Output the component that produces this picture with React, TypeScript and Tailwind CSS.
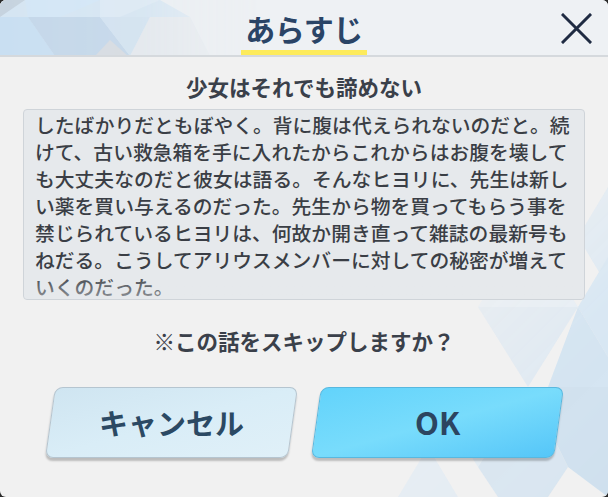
import React from 'react';

const bodyLines = [
  'したばかりだともぼやく。背に腹は代えられないのだと。続',
  'けて、古い救急箱を手に入れたからこれからはお腹を壊して',
  'も大丈夫なのだと彼女は語る。そんなヒヨリに、先生は新し',
  'い薬を買い与えるのだった。先生から物を買ってもらう事を',
  '禁じられているヒヨリは、何故か開き直って雑誌の最新号も',
  'ねだる。こうしてアリウスメンバーに対しての秘密が増えて',
  'いくのだった。',
];

const font = { fontFamily: '"Noto Sans CJK JP", "Noto Sans", sans-serif' };

// faint triangle pattern in the header's top-left corner
const HeaderPattern = () => (
  <svg className="absolute left-0 top-0" width="260" height="56" viewBox="0 0 260 56">
    <defs>
      <linearGradient id="hfade" x1="0" y1="0" x2="1" y2="0">
        <stop offset="0" stopColor="#fff" stopOpacity="1" />
        <stop offset="0.55" stopColor="#fff" stopOpacity="0.9" />
        <stop offset="1" stopColor="#fff" stopOpacity="0" />
      </linearGradient>
      <mask id="hmask">
        <rect width="260" height="56" fill="url(#hfade)" />
      </mask>
    </defs>
    <g mask="url(#hmask)">
      <rect width="260" height="56" fill="#d5e5f2" />
      <polygon points="0,0 25,0 0,17" fill="#c6d3df" />
      <polygon points="25,0 100,0 60,17 28,17" fill="#d3e6f6" />
      <polygon points="0,17 28,17 55,56 0,56" fill="#c9dff2" />
      <polygon points="28,17 100,17 130,56 55,56" fill="#c4d7e9" />
      <polygon points="100,0 160,0 120,17 100,17" fill="#dce9f4" />
      <polygon points="100,17 150,17 130,56" fill="#d2e2f0" />
      <polygon points="95,56 110,40 128,56" fill="#d6dbe1" />
      <polygon points="130,56 150,17 190,17 210,56" fill="#e3e8ed" />
      <polygon points="160,0 260,0 260,56 210,56 190,17" fill="#eaeef2" />
    </g>
  </svg>
);

// triangle pattern fading in at the lower right
const BodyPattern = () => (
  <svg className="absolute right-0 bottom-0" width="330" height="330" viewBox="0 0 330 330">
    <defs>
      <linearGradient id="bfade" x1="0" y1="0" x2="1" y2="1">
        <stop offset="0.2" stopColor="#fff" stopOpacity="0" />
        <stop offset="0.7" stopColor="#fff" stopOpacity="0.9" />
        <stop offset="1" stopColor="#fff" stopOpacity="1" />
      </linearGradient>
      <mask id="bmask">
        <rect width="330" height="330" fill="url(#bfade)" />
      </mask>
    </defs>
    <g mask="url(#bmask)">
      <polygon points="330,20 300,70 330,120" fill="#dde9f3" />
      <polygon points="250,60 300,140 200,140" fill="#e6eef5" />
      <polygon points="300,140 330,90 330,190" fill="#d6e6f3" />
      <polygon points="200,140 300,140 250,220" fill="#dfe9f2" />
      <polygon points="300,140 330,190 330,250 270,220" fill="#d2e3f1" />
      <polygon points="150,220 250,220 200,300" fill="#e2ebf3" />
      <polygon points="250,220 330,220 330,330 290,300" fill="#cfe0ee" />
      <polygon points="200,300 250,220 290,300 270,330 220,330" fill="#d8e5f0" />
      <polygon points="120,330 150,280 180,330" fill="#e4ecf3" />
    </g>
  </svg>
);

export default function App() {
  return (
    <div className="w-[608px] h-[497px] bg-[#2a2a2a]" style={font}>
      <div className="relative w-[608px] h-[497px] rounded-[6px] overflow-hidden bg-[#f1f1f1] flex flex-col">
        <BodyPattern />

        {/* Header */}
        <div className="relative h-[57px] shrink-0 bg-[#eef1f4] border-b-[2px] border-[#d5d9dd] overflow-hidden">
          <HeaderPattern />
          <div className="relative flex flex-col items-center pt-[8px]">
            <span className="text-[30px] leading-[40px] font-semibold text-[#2a4466] tracking-[-0.5px]">あらすじ</span>
          </div>
          <div className="absolute left-[241px] top-[50px] w-[126px] h-[5px] bg-[#fdeb5c]" />
          <svg className="absolute left-[561px] top-[13px]" width="31" height="31" viewBox="0 0 31 31">
            <path d="M2 2 L29 29 M29 2 L2 29" stroke="#1f2b42" strokeWidth="3" strokeLinecap="square" />
          </svg>
        </div>

        {/* Body */}
        <div className="relative flex flex-col items-center pt-[15px]">
          <div className="text-[21.5px] leading-[30px] font-bold text-[#3a404a]">少女はそれでも諦めない</div>

          <div className="relative mt-[7px] w-[562px] h-[191px] rounded-[4px] border border-[#cfd4d9] bg-[#e6e9ec] pl-[11px] pt-[1px]">
            {bodyLines.map((line, i) => (
              <div key={i} className="whitespace-nowrap text-[19.8px] leading-[27px] font-medium text-[#3a3e45]">
                {line}
              </div>
            ))}
            <div className="absolute left-0 right-0 bottom-0 h-[26px] rounded-b-[4px] bg-gradient-to-b from-[#e6e9ec00] to-[#e6e9ec80]" />
          </div>

          <div className="mt-[26px] text-[21.5px] leading-[30px] font-bold text-[#3a404a]">※この話をスキップしますか？</div>

          <div className="mt-[31px] flex gap-[23px] justify-center">
            <button className="w-[243px] h-[71px] -skew-x-[8deg] rounded-[8px] border border-[#b5c5d0] bg-gradient-to-br from-[#cfe5f1] via-[#d9edf7] to-[#e0f0f8] shadow-[0_3px_2px_rgba(0,0,0,0.22)] flex items-center justify-center">
              <span className="skew-x-[8deg] text-[29px] font-bold text-[#2b4963]">キャンセル</span>
            </button>
            <button className="w-[243px] h-[71px] -skew-x-[8deg] rounded-[8px] border border-[#58b8df] bg-gradient-to-br from-[#62d3fb] via-[#78dcfc] to-[#55c6f8] shadow-[0_3px_2px_rgba(0,0,0,0.22)] flex items-center justify-center">
              <span className="skew-x-[8deg] text-[31px] font-bold text-[#2c4560]">OK</span>
            </button>
          </div>
        </div>
      </div>
    </div>
  );
}
